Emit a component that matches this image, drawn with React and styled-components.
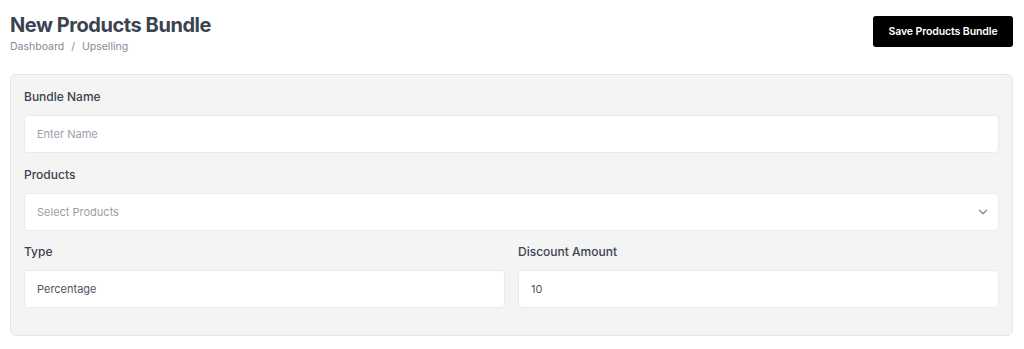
import React from "react"
import styled, { createGlobalStyle } from "styled-components"

const GlobalStyle = createGlobalStyle`
  body {
    margin: 0;
    background: #ffffff;
    font-family: Inter, "Noto Sans", sans-serif;
  }
`

const Page = styled.div`
  padding: 12px 11px 0 10px;
`

const Header = styled.div`
  display: flex;
  justify-content: space-between;
  align-items: flex-start;
  height: 62px;
`

const Title = styled.h1`
  margin: 0;
  font-size: 20px;
  line-height: 26px;
  font-weight: 700;
  color: #3b4350;
  letter-spacing: -0.45px;
`

const Crumbs = styled.div`
  display: flex;
  gap: 7px;
  font-size: 10.5px;
  line-height: 16px;
  color: #858a96;
  margin-top: 1px;
`

const SaveButton = styled.button`
  margin-top: 4px;
  width: 140px;
  height: 31px;
  background: #000;
  color: #fff;
  border: 0;
  border-radius: 3px;
  font-family: inherit;
  font-size: 10.5px;
  font-weight: 600;
  letter-spacing: -0.1px;
  cursor: pointer;
`

const Card = styled.div`
  background: #f4f4f4;
  border: 1px solid #e6e6e6;
  border-radius: 6px;
  padding: 13px 13px 27px;
  display: flex;
  flex-direction: column;
  gap: 13px;
`

const Row = styled.div`
  display: grid;
  grid-template-columns: 1fr 1fr;
  gap: 13px;
  margin-top: -1px;
`

const Field = styled.div`
  display: flex;
  flex-direction: column;
  gap: 9px;
`

const Label = styled.label`
  font-size: 12px;
  line-height: 18px;
  font-weight: 500;
  color: #3b4350;
`

const Box = styled.div`
  height: 38px;
  box-sizing: border-box;
  background: #fff;
  border: 1px solid #ebebeb;
  border-radius: 4px;
  padding: 0 8px 0 12px;
  display: flex;
  align-items: center;
  justify-content: space-between;
  font-size: 11px;
  color: ${({ $placeholder }) => ($placeholder ? "#9aa0aa" : "#50555f")};
`

const Chevron = () => (
  <svg width="14" height="14" viewBox="0 0 24 24" fill="none" stroke="#858a93" strokeWidth="2.4" strokeLinecap="round" strokeLinejoin="round">
    <path d="M6 9l6 6 6-6" />
  </svg>
)

export default function App() {
  return (
    <Page>
      <GlobalStyle />
      <Header>
        <div>
          <Title>New Products Bundle</Title>
          <Crumbs>
            <span>Dashboard</span>
            <span>/</span>
            <span>Upselling</span>
          </Crumbs>
        </div>
        <SaveButton>Save Products Bundle</SaveButton>
      </Header>
      <Card>
        <Field>
          <Label>Bundle Name</Label>
          <Box $placeholder>Enter Name</Box>
        </Field>
        <Field>
          <Label>Products</Label>
          <Box $placeholder>
            Select Products
            <Chevron />
          </Box>
        </Field>
        <Row>
          <Field>
            <Label>Type</Label>
            <Box>Percentage</Box>
          </Field>
          <Field>
            <Label>Discount Amount</Label>
            <Box>10</Box>
          </Field>
        </Row>
      </Card>
    </Page>
  )
}
